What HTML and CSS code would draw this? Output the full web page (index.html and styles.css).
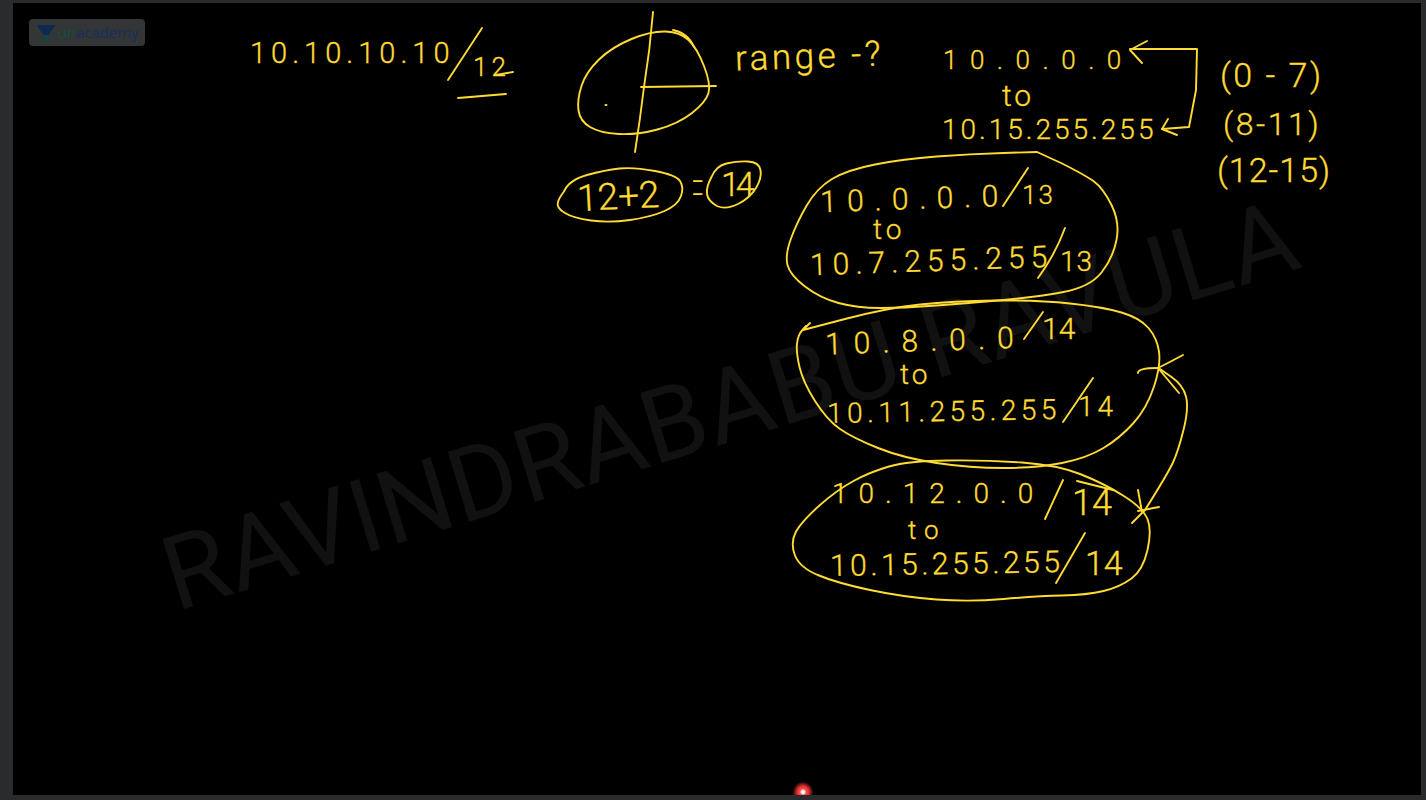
FILE: index.html
```html
<!DOCTYPE html>
<html lang="en">
<head>
<meta charset="utf-8">
<title>Whiteboard</title>
<link rel="stylesheet" href="styles.css">
</head>
<body>
<main class="frame">
  <section class="board">
    <div class="watermark">RAVINDRABABU RAVULA</div>

    <div class="brand">
      <svg class="brand-icon" viewBox="0 0 18 16" aria-hidden="true">
        <path class="brand-navy" d="M0 0H18C17 4 13 6 12 10H6C5 6 1 4 0 0Z"/>
        <path class="brand-green" d="M5 16C5 13 7 11.500 9 11.500C11 11.500 13 13 13 16Z"/>
      </svg>
      <span class="brand-name"><span class="brand-un">un</span>academy</span>
    </div>

    <svg class="ink-layer" viewBox="13 3 1408 792" aria-hidden="true">
      <!-- first address -->
      <path d="M448 80L482 28"/>
      <path d="M496 75L513 72"/>
      <path d="M458 98L506 94"/>
      <!-- circle -->
      <path d="M665.500 31.500Q680 32 688.500 40Q697 48 704 66Q711 84 708.500 93Q706 102 692 113Q678 124 657.500 129.500Q637 135 618.500 134Q600 133 590 127Q580 121 578.500 110.500Q577 100 581.500 86Q586 72 599 59.500Q612 47 631.500 39Q651 31 665.500 31.500Z"/>
      <path d="M673 30Q688 33 694 47"/>
      <path d="M653 12Q650 50 644 87Q640 120 635 152"/>
      <path d="M641 87L716 86"/>
      <path d="M605.500 105h1"/>
      <!-- 12+2 = 14 -->
      <path d="M564 191.500Q569 180 587 175Q605 170 619.500 168.500Q634 167 655 171Q676 175 680 181Q684 187 681 196Q678 205 664.500 211Q651 217 630 220Q609 223 591 220.500Q573 218 565 213Q556 208 558 202Q559 198 564 191.500Z"/>
      <path d="M711.500 177Q716 166 726.500 163.500Q737 161 748 161.500Q759 162 760.500 170Q762 178 756 188Q750 198 738 204Q726 210 717 206Q708 201 707 194Q706 187 711.500 177Z"/>
      <!-- arrow bracket -->
      <path d="M1147 41L1130 50L1142 63"/>
      <path d="M1130 49L1197 49L1196 90L1189 127L1162 129"/>
      <path d="M1168 119L1162 129L1177 135"/>
      <!-- oval one -->
      <path d="M1037 152L1061 163Q1085 175 1094 181.500Q1103 188 1111.500 205Q1120 222 1116.500 240Q1113 258 1101.500 272.500Q1090 287 1063.500 292Q1037 297 1003.500 300Q970 303 936.500 305.500Q903 308 880 308Q857 308 838.500 303Q820 298 805 286.500Q790 275 787.500 265Q785 255 791 238.500Q797 222 807 205Q817 188 832 179Q847 170 875 164.500Q903 159 936.500 156.500Q970 154 1003.500 153L1037 152"/>
      <path d="M1003 206L1028 168"/>
      <path d="M1038 278Q1055 255 1065 228"/>
      <!-- oval two -->
      <path d="M810 323L803 330L845 319Q887 308 920 304.500Q953 301 995 300.500Q1037 300 1070 303.500Q1103 307 1121.500 312.500Q1140 318 1148.500 328Q1157 338 1159 351.500Q1161 365 1154 386.500Q1147 408 1133.500 423Q1120 438 1103.500 448Q1087 458 1062 463Q1037 468 1003.500 468Q970 468 936.500 463Q903 458 878 448Q853 438 840 429Q827 420 815 401Q803 382 799.500 367Q796 352 797 343.500Q798 335 802 330.500L806 326"/>
      <path d="M1024 339L1043 312"/>
      <path d="M1063 422L1093 378"/>
      <!-- oval three -->
      <path d="M947.500 460.500Q987 460 1022 462.500Q1057 465 1080 474Q1103 483 1123 495.500Q1143 508 1147.500 519Q1152 530 1147.500 550Q1143 570 1131.500 578.500Q1120 587 1103.500 591Q1087 595 1062 595.500Q1037 596 1003.500 599Q970 602 936.500 599.500Q903 597 870 590Q837 583 819 575.500Q800 568 795 555.500Q790 543 796 531.500Q803 520 820 505Q837 490 853.500 481Q870 472 889 466.500Q908 461 947.500 460.500Z"/>
      <path d="M1045 519L1063 480"/>
      <path d="M1077 481L1113 490"/>
      <path d="M1056 583L1085 533"/>
      <!-- swap arrow -->
      <path d="M1138 373Q1138 368 1158 368Q1170 362 1183 355"/>
      <path d="M1158 368L1179 393"/>
      <path d="M1160 369L1171.500 377Q1183 385 1186 396.500Q1189 408 1183.500 430Q1178 452 1172.500 463.500Q1167 475 1145 510"/>
      <path d="M1132 523L1145 510"/>
      <path d="M1138 490L1142 512"/>
      <path d="M1138 511L1159 507"/>
    </svg>

    <span class="ink t-a1">10.10.10.10</span>
    <span class="ink t-a2">12</span>
    <span class="ink t-range">range -?</span>
    <span class="ink t-sum">12+2</span>
    <span class="ink t-eq">=</span>
    <span class="ink t-res">14</span>

    <span class="ink t-r1">10.0.0.0</span>
    <span class="ink t-r2">to</span>
    <span class="ink t-r3">10.15.255.255</span>
    <span class="ink t-p1">(0 - 7)</span>
    <span class="ink t-p2">(8-11)</span>
    <span class="ink t-p3">(12-15)</span>

    <span class="ink t-o1a">10.0.0.0</span>
    <span class="ink t-o1b">13</span>
    <span class="ink t-o1c">to</span>
    <span class="ink t-o1d">10.7.255.255</span>
    <span class="ink t-o1e">13</span>

    <span class="ink t-o2a">10.8.0.0</span>
    <span class="ink t-o2b">14</span>
    <span class="ink t-o2c">to</span>
    <span class="ink t-o2d">10.11.255.255</span>
    <span class="ink t-o2e">14</span>

    <span class="ink t-o3a">10.12.0.0</span>
    <span class="ink t-o3b">14</span>
    <span class="ink t-o3c">to</span>
    <span class="ink t-o3d">10.15.255.255</span>
    <span class="ink t-o3e">14</span>

    <div class="pointer"></div>
  </section>
</main>
</body>
</html>
```
FILE: styles.css
```css
* { box-sizing: border-box; }

html, body {
  margin: 0;
  height: 100%;
  background: #2a2b2d;
}

.frame {
  height: 800px;
  padding: 3px 5px 5px 13px;
  background: #2a2b2d;
}

.board {
  position: relative;
  height: 100%;
  background: #000;
  overflow: hidden;
}

.watermark {
  position: absolute;
  left: 717px;
  top: 402px;
  transform: translate(-50%, -50%) rotate(-17deg);
  font-family: Roboto, "Liberation Sans", sans-serif;
  font-size: 103px;
  line-height: 1;
  letter-spacing: 1px;
  white-space: nowrap;
  color: #111;
}

.brand {
  position: absolute;
  left: 16px;
  top: 16px;
  width: 116px;
  height: 27px;
  padding-left: 8px;
  display: flex;
  align-items: center;
  gap: 3px;
  background: #343536;
  border-radius: 4px;
}

.brand-icon { width: 18px; height: 16px; flex: none; }
.brand-navy { fill: #0d2a52; }
.brand-green { fill: #0b4a3b; }

.brand-name {
  font-family: "Open Sans", Lato, sans-serif;
  font-size: 15px;
  letter-spacing: -0.1px;
  line-height: 1;
  color: #14305c;
}

.brand-un { color: #0f5040; }

.ink-layer {
  position: absolute;
  left: 0;
  top: 0;
  width: 1408px;
  height: 792px;
  fill: none;
  stroke: #ffdb33;
  stroke-width: 1.900;
  stroke-linecap: round;
  stroke-linejoin: round;
}

.ink {
  position: absolute;
  font-family: Roboto, "Open Sans", sans-serif;
  font-weight: 300;
  line-height: 1;
  white-space: nowrap;
  color: #ffdb33;
  -webkit-text-stroke: 0.35px #ffdb33;
}

.t-a1 { left: 237px; top: 36px; font-size: 29px; letter-spacing: 5px; }
.t-a2 { left: 460px; top: 51px; font-size: 26px; letter-spacing: 4px; }
.t-range { left: 722px; top: 36px; font-size: 35px; letter-spacing: 3.500px; transform: rotate(-2deg); }
.t-sum { left: 564px; top: 175px; font-size: 37px; transform: rotate(-3deg); }
.t-eq { left: 667px; top: 153px; font-size: 64px; font-weight: 100; transform: scaleX(0.35); -webkit-text-stroke: 0; }
.t-res { left: 708px; top: 164px; font-size: 34px; letter-spacing: -4px; }

.t-r1 { left: 930px; top: 44px; font-size: 26px; letter-spacing: 12.500px; }
.t-r2 { left: 989px; top: 78px; font-size: 30px; letter-spacing: 3px; }
.t-r3 { left: 929px; top: 113px; font-size: 28px; letter-spacing: 3px; }
.t-p1 { left: 1207px; top: 55px; font-size: 34px; letter-spacing: 2.500px; }
.t-p2 { left: 1210px; top: 105px; font-size: 32px; letter-spacing: 2.500px; }
.t-p3 { left: 1204px; top: 150px; font-size: 34px; letter-spacing: 1px; }

.t-o1a { left: 807px; top: 181px; font-size: 30px; letter-spacing: 10.500px; transform: rotate(-2deg); }
.t-o1b { left: 1009px; top: 179px; font-size: 26px; letter-spacing: 2px; }
.t-o1c { left: 860px; top: 213px; font-size: 28px; letter-spacing: 4px; }
.t-o1d { left: 797px; top: 243px; font-size: 30px; letter-spacing: 6px; transform: rotate(-2deg); }
.t-o1e { left: 1047px; top: 245px; font-size: 28px; letter-spacing: 1px; }

.t-o2a { left: 812px; top: 323px; font-size: 30px; letter-spacing: 12px; transform: rotate(-2deg); }
.t-o2b { left: 1029px; top: 311px; font-size: 30px; }
.t-o2c { left: 887px; top: 358px; font-size: 28px; letter-spacing: 3px; }
.t-o2d { left: 814px; top: 395px; font-size: 28px; letter-spacing: 4.500px; transform: rotate(-1deg); }
.t-o2e { left: 1065px; top: 390px; font-size: 28px; letter-spacing: 4px; }

.t-o3a { left: 819px; top: 477px; font-size: 28px; letter-spacing: 11px; }
.t-o3b { left: 1059px; top: 482px; font-size: 36px; }
.t-o3c { left: 895px; top: 514px; font-size: 26px; letter-spacing: 8px; }
.t-o3d { left: 817px; top: 546px; font-size: 30px; letter-spacing: 3.500px; transform: rotate(-1deg); }
.t-o3e { left: 1072px; top: 543px; font-size: 34px; }

.pointer {
  position: absolute;
  left: 780px;
  top: 779px;
  width: 20px;
  height: 20px;
  border-radius: 50%;
  background: radial-gradient(circle, #fff 0, #fff 10%, #ff5050 22%, #e03030 42%, rgba(120, 20, 20, 0.5) 65%, rgba(0, 0, 0, 0) 100%);
}
```
